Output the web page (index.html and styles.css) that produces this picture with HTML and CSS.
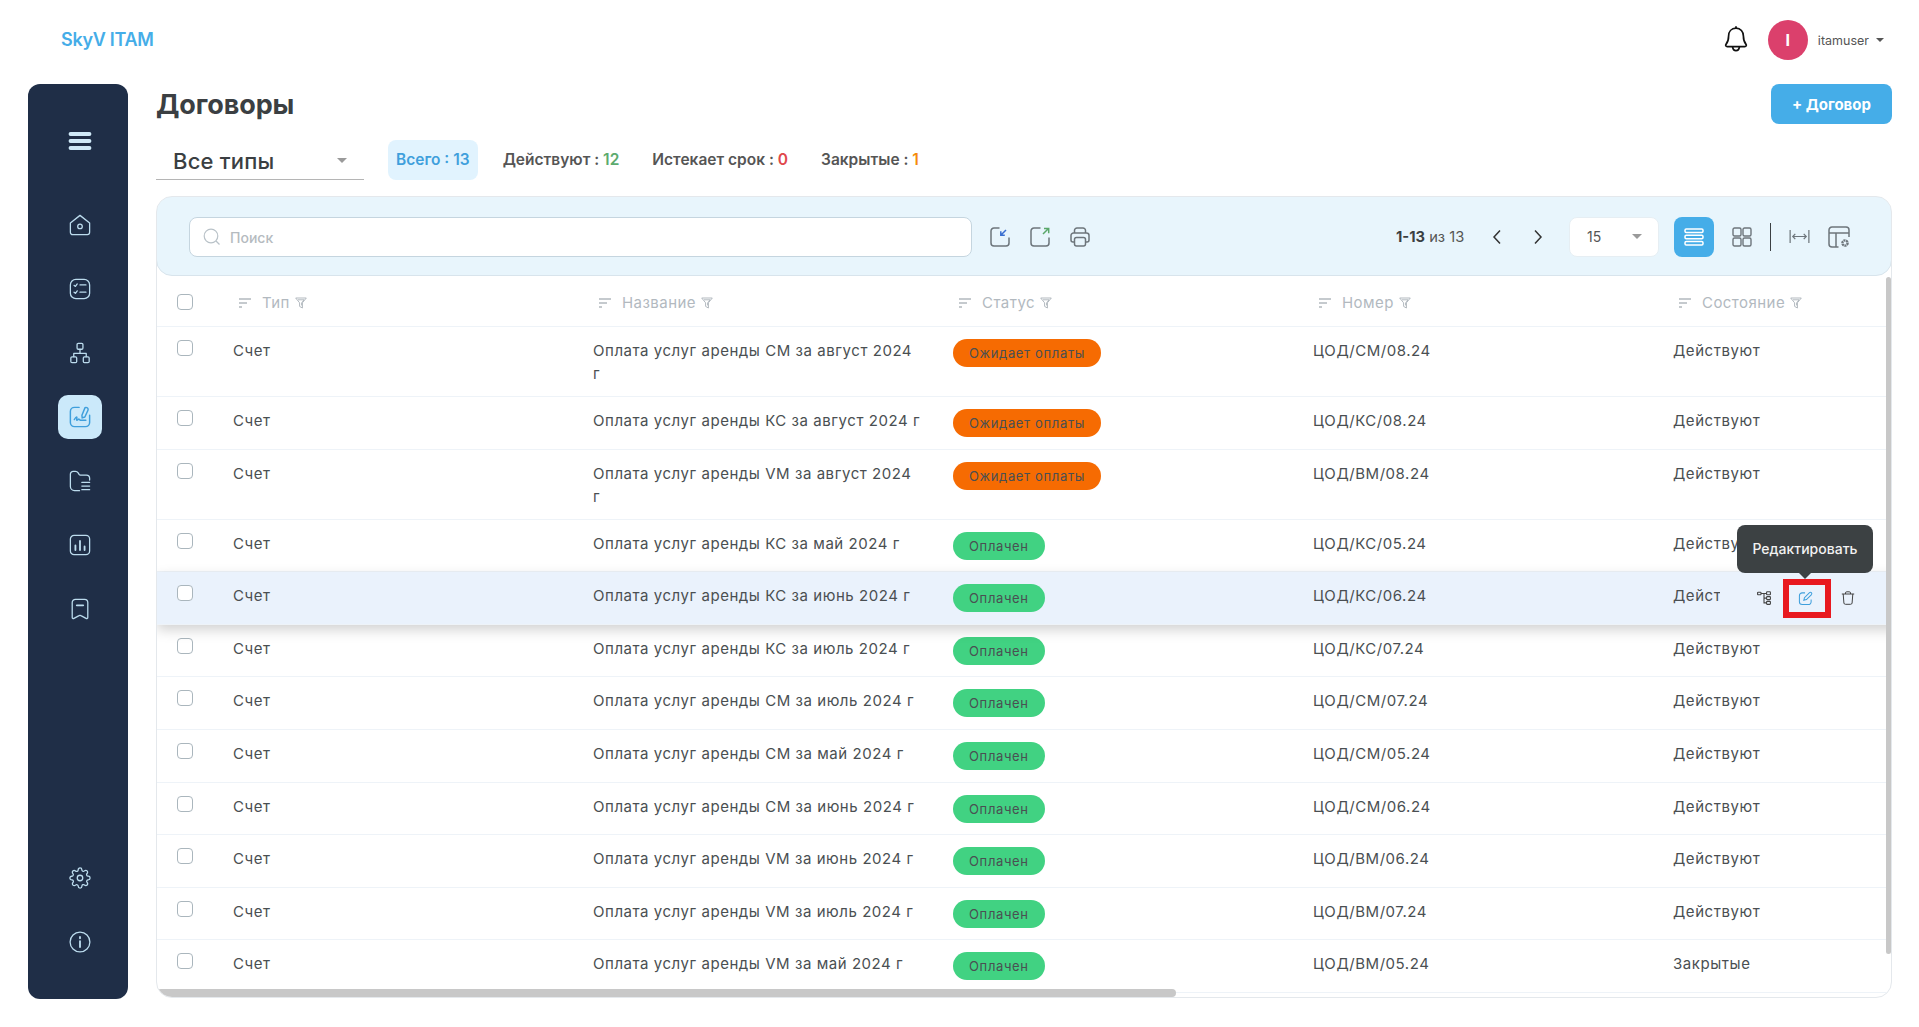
FILE: index.html
```html
<!DOCTYPE html>
<html lang="ru">
<head>
    <meta charset="utf-8">
    <title>Договоры</title>
    <link rel="stylesheet" href="styles.css">
</head>
<body>
    <svg class="sprite" xmlns="http://www.w3.org/2000/svg">
        <symbol id="i-sort" viewBox="0 0 12 10"><path d="M0 1h12M0 5h8M0 9h3" fill="none" stroke="currentColor" stroke-width="1.3"/></symbol>
        <symbol id="i-filter" viewBox="0 0 12 12"><path d="M.7 1h10.6L7.4 5.8V11L4.6 9.4V5.8zM3 2.8h6L6.6 6v2.4" fill="none" stroke="currentColor" stroke-width="1"/></symbol>
        <symbol id="i-tree" viewBox="0 0 14 14"><g fill="none" stroke="currentColor" stroke-width="1.1"><rect x=".6" y="1.2" width="3.4" height="2.6" rx=".6"/><rect x="9.6" y=".8" width="3.8" height="3" rx=".6"/><rect x="9.6" y="5.6" width="3.8" height="3" rx=".6"/><rect x="9.6" y="10.4" width="3.8" height="3" rx=".6"/><path d="M4 2.5h5.6M7 2.5v9.4h2.6M7 7.1h2.6"/></g></symbol>
    </svg>

    <header class="topbar">
        <div class="logo">SkyV ITAM</div>
        <div class="user">
            <svg class="bell" viewBox="0 0 24 28" fill="none" stroke="#111" stroke-width="1.7" stroke-linejoin="round"><path d="M12 3.2c-4.6 0-7.4 3.4-7.4 7.8 0 3.6-.6 6-2.6 8.4-.8 1 0 2.2 1.2 2.2h17.6c1.2 0 2-1.2 1.2-2.2-2-2.4-2.6-4.8-2.6-8.4 0-4.4-2.8-7.8-7.4-7.8z"/><path d="M12 1.2v2M8.6 21.8c.3 2.4 1.700 3.800 3.400 3.800s3.100-1.400 3.400-3.800"/></svg>
            <div class="avatar">I</div>
            <div class="username">itamuser</div>
            <span class="caret caret-dark"></span>
        </div>
    </header>

    <div class="layout">
        <nav class="sidebar">
            <a class="nav-burger"><svg viewBox="0 0 24 24" fill="none" stroke="#cfe9f8" stroke-width="3.800" stroke-linecap="round"><path d="M2.500 5h19M2.500 12h19M2.500 19h19"/></svg></a>
            <div class="nav-group">
                <a class="nav-item"><svg viewBox="0 0 24 24"><path d="M1.500 9.800 12 1.500l10.500 8.300v10.200a2.500 2.500 0 0 1-2.500 2.500H4A2.500 2.500 0 0 1 1.500 20z"/><circle cx="12" cy="13.500" r="2.500"/></svg></a>
                <a class="nav-item"><svg viewBox="0 0 24 24"><rect x="1.500" y="1.500" width="21" height="21" rx="6"/><path d="M5.500 8l1.500 1.200L9 6.500M5.500 15.500 7 16.700l2-2.700M12 7.500h6.500M12 15.500h6.500"/></svg></a>
                <a class="nav-item"><svg viewBox="0 0 24 24"><rect x="8.800" y="1.500" width="6.400" height="6.400" rx="1.300"/><rect x="2" y="16.200" width="6.400" height="6.400" rx="1.300"/><rect x="15.600" y="16.200" width="6.400" height="6.400" rx="1.300"/><path d="M12 8v4.500M5.200 16v-3.500h13.600V16"/></svg></a>
                <a class="nav-item active"><svg viewBox="0 0 24 24"><path d="M11 1.500H6A4.500 4.500 0 0 0 1.500 6v12A4.500 4.500 0 0 0 6 22.500h12a4.500 4.500 0 0 0 4.500-4.500v-8"/><path d="M17.500 1.800c1.300-.6 3 .2 3.300 1.500.2.800 0 1.300-.5 2.200l-3 6.500-2.900 1-.3-3zM5.800 14.800c1.200-2 2-3.200 2.700-2.800.8.500-.8 3.200 0 3.600.8.400 1.600-1.500 2.400-1.300.8.200.6 1.200 1.500 1.300h6"/></svg></a>
                <a class="nav-item"><svg viewBox="0 0 24 24"><path d="M11.500 22.500H6A4.500 4.500 0 0 1 1.500 18V4.500a3 3 0 0 1 3-3H7c1.500 0 2.300.6 3 1.700l1 1.600c.4.600.9.700 1.500.7h6.500a3.500 3.500 0 0 1 3.500 3.500V11"/><path d="M14 13.500h8.500M14 17.500h8.500M14 21.500h8.500"/></svg></a>
                <a class="nav-item"><svg viewBox="0 0 24 24"><rect x="1.500" y="1.500" width="21" height="21" rx="4"/><path d="M7 12.500v5M12 7.500v10M17 13.500v4" stroke-width="2"/></svg></a>
                <a class="nav-item"><svg viewBox="0 0 24 24"><path d="M3.500 5a3.500 3.500 0 0 1 3.500-3.500h10A3.500 3.500 0 0 1 20.500 5v16.200c0 1-1 1.500-1.900 1l-5.600-3a2 2 0 0 0-2 0l-5.600 3c-.9.500-1.900 0-1.900-1z"/><path d="M8.500 8h7" stroke-width="2"/></svg></a>
            </div>
            <div class="nav-group nav-bottom">
                <a class="nav-item"><svg viewBox="0 0 24 24"><circle cx="12" cy="12" r="3"/><path d="M19.400 15a1.650 1.650 0 0 0 .33 1.820l.06.06a2 2 0 0 1 0 2.830 2 2 0 0 1-2.830 0l-.06-.06a1.650 1.650 0 0 0-1.820-.33 1.650 1.650 0 0 0-1 1.510V21a2 2 0 0 1-2 2 2 2 0 0 1-2-2v-.09A1.650 1.650 0 0 0 9 19.400a1.650 1.650 0 0 0-1.820.33l-.06.06a2 2 0 0 1-2.830 0 2 2 0 0 1 0-2.830l.06-.06a1.650 1.650 0 0 0 .33-1.820 1.650 1.650 0 0 0-1.510-1H3a2 2 0 0 1-2-2 2 2 0 0 1 2-2h.09A1.650 1.650 0 0 0 4.600 9a1.650 1.650 0 0 0-.33-1.820l-.06-.06a2 2 0 0 1 0-2.830 2 2 0 0 1 2.830 0l.06.06a1.650 1.650 0 0 0 1.820.33H9a1.650 1.650 0 0 0 1-1.510V3a2 2 0 0 1 2-2 2 2 0 0 1 2 2v.09a1.650 1.650 0 0 0 1 1.510 1.650 1.650 0 0 0 1.820-.33l.06-.06a2 2 0 0 1 2.830 0 2 2 0 0 1 0 2.830l-.06.06a1.650 1.650 0 0 0-.33 1.820V9a1.650 1.650 0 0 0 1.510 1H21a2 2 0 0 1 2 2 2 2 0 0 1-2 2h-.09a1.650 1.650 0 0 0-1.510 1z"/></svg></a>
                <a class="nav-item"><svg viewBox="0 0 24 24"><circle cx="12" cy="12" r="10.800"/><path d="M12 11v6.500M12 6.500v1.500" stroke-width="2"/></svg></a>
            </div>
        </nav>

        <main class="content">
            <div class="title-row">
                <h1>Договоры</h1>
                <button class="btn-add">+ Договор</button>
            </div>

            <div class="filter-row">
                <div class="type-select">Все типы <span class="caret"></span></div>
                <div class="chip chip-active">Всего : 13</div>
                <div class="chip">Действуют : <b class="green">12</b></div>
                <div class="chip">Истекает срок : <b class="red">0</b></div>
                <div class="chip">Закрытые : <b class="orange">1</b></div>
            </div>

            <section class="card">
                <div class="toolbar">
                    <div class="search">
                        <svg class="search-icon" viewBox="0 0 18 18" fill="none" stroke="#b9c2c8" stroke-width="1.200"><circle cx="8" cy="8" r="6.800"/><path d="M13 13l3.500 3.500"/></svg>
                        <span class="search-text">Поиск</span>
                    </div>
                    <div class="tools">
                        <svg viewBox="0 0 20 20" fill="none" stroke="#6d757b" stroke-width="1.500"><path d="M9.500 1H4a3 3 0 0 0-3 3v12a3 3 0 0 0 3 3h12a3 3 0 0 0 3-3V10.500"/><path d="M16 3l-5 5M10.800 4.200v4h4" stroke="#3a6fd0"/></svg>
                        <svg viewBox="0 0 20 20" fill="none" stroke="#6d757b" stroke-width="1.500"><path d="M10.500 1H4a3 3 0 0 0-3 3v12a3 3 0 0 0 3 3h12a3 3 0 0 0 3-3V10.500"/><path d="M13 7l5.500-5.500M14 1.500h4.700v4.700" stroke="#5aa86a"/></svg>
                        <svg viewBox="0 0 20 20" fill="none" stroke="#6d757b" stroke-width="1.500"><path d="M4.500 6V3.500A2.500 2.500 0 0 1 7 1h6a2.500 2.500 0 0 1 2.500 2.500V6"/><path d="M4.500 15H3a2 2 0 0 1-2-2V8.500A2.500 2.500 0 0 1 3.500 6h13A2.500 2.500 0 0 1 19 8.500V13a2 2 0 0 1-2 2h-1.500"/><rect x="4.500" y="10.500" width="11" height="8.500" rx="2"/></svg>
                    </div>
                    <div class="pager">
                        <span class="pager-text"><b>1-13</b> из 13</span>
                        <svg class="chev" viewBox="0 0 10 16" fill="none" stroke="#333" stroke-width="1.500"><path d="M8 1.500 2 8l6 6.500"/></svg>
                        <svg class="chev" viewBox="0 0 10 16" fill="none" stroke="#333" stroke-width="1.500"><path d="M2 1.500 8 8l-6 6.500"/></svg>
                        <div class="per-page">15 <span class="caret"></span></div>
                    </div>
                    <div class="views">
                        <div class="view-btn"><svg viewBox="0 0 20 20" fill="none" stroke="#fff" stroke-width="1.500"><rect x="1" y="2" width="18" height="3.400" rx="1.200"/><rect x="1" y="8.300" width="18" height="3.400" rx="1.200"/><rect x="1" y="14.600" width="18" height="3.400" rx="1.200"/></svg></div>
                        <svg class="view-icon" viewBox="0 0 20 20" fill="none" stroke="#6d757b" stroke-width="1.400"><rect x="1" y="1" width="8" height="8" rx="1.500"/><rect x="11" y="1" width="8" height="8" rx="1.500"/><rect x="1" y="11" width="8" height="8" rx="1.500"/><rect x="11" y="11" width="8" height="8" rx="1.500"/></svg>
                        <span class="divider"></span>
                        <svg class="view-icon fit" viewBox="0 0 22 16" fill="none" stroke="#6d757b" stroke-width="1.300"><path d="M1 1v14M21 1v14M4 8h14M6.500 5.200 3.800 8l2.700 2.800M15.500 5.200 18.200 8l-2.700 2.800"/></svg>
                        <svg class="view-icon cols" viewBox="0 0 22 22" fill="none" stroke="#6d757b" stroke-width="1.500"><path d="M10.500 21H4a3 3 0 0 1-3-3V4a3 3 0 0 1 3-3h14a3 3 0 0 1 3 3v7M1 7h20M8 7v14"/><circle cx="17" cy="17" r="2.600" stroke-width="2.400" stroke-dasharray="2 .6"/></svg>
                    </div>
                </div>

                <div class="table-wrap">
                    <table>
                        <thead>
                            <tr>
                                <th class="col-check"><input type="checkbox"></th>
                                <th><svg class="sort"><use href="#i-sort"/></svg>Тип<svg class="filter"><use href="#i-filter"/></svg></th>
                                <th><svg class="sort"><use href="#i-sort"/></svg>Название<svg class="filter"><use href="#i-filter"/></svg></th>
                                <th><svg class="sort"><use href="#i-sort"/></svg>Статус<svg class="filter"><use href="#i-filter"/></svg></th>
                                <th><svg class="sort"><use href="#i-sort"/></svg>Номер<svg class="filter"><use href="#i-filter"/></svg></th>
                                <th><svg class="sort"><use href="#i-sort"/></svg>Состояние<svg class="filter"><use href="#i-filter"/></svg></th>
                            </tr>
                        </thead>
                        <tbody>
                            <tr class="tall"><td class="col-check"><input type="checkbox"></td><td>Счет</td><td>Оплата услуг аренды СМ за август 2024 г</td><td><span class="badge wait">Ожидает оплаты</span></td><td>ЦОД/СМ/08.24</td><td>Действуют</td></tr>
                            <tr><td class="col-check"><input type="checkbox"></td><td>Счет</td><td>Оплата услуг аренды КС за август 2024 г</td><td><span class="badge wait">Ожидает оплаты</span></td><td>ЦОД/КС/08.24</td><td>Действуют</td></tr>
                            <tr class="tall"><td class="col-check"><input type="checkbox"></td><td>Счет</td><td>Оплата услуг аренды VM за август 2024 г</td><td><span class="badge wait">Ожидает оплаты</span></td><td>ЦОД/ВМ/08.24</td><td>Действуют</td></tr>
                            <tr><td class="col-check"><input type="checkbox"></td><td>Счет</td><td>Оплата услуг аренды КС за май 2024 г</td><td><span class="badge paid">Оплачен</span></td><td>ЦОД/КС/05.24</td><td>Действуют</td></tr>
                            <tr class="hovered">
                                <td class="col-check"><input type="checkbox"></td><td>Счет</td><td>Оплата услуг аренды КС за июнь 2024 г</td><td><span class="badge paid">Оплачен</span></td><td>ЦОД/КС/06.24</td>
                                <td class="has-actions">Действуют
                                    <div class="row-actions">
                                        <svg class="act"><use href="#i-tree"/></svg>
                                        <div class="act-edit">
                                            <svg viewBox="0 0 16 16" fill="none" stroke="#3f9fdc" stroke-width="1.100"><path d="M7.500 2H4.500A3 3 0 0 0 1.500 5v6.500a3 3 0 0 0 3 3H11a3 3 0 0 0 3-3V9"/><path d="M12.300 1.700a1.500 1.500 0 0 1 2.100 2.100L9 9.200l-2.800.7.700-2.800z"/></svg>
                                            <div class="tooltip">Редактировать</div>
                                        </div>
                                        <svg class="act" viewBox="0 0 14 14" fill="none" stroke="#444" stroke-width="1"><path d="M.8 3h12.400M4.500 3V2a1.200 1.200 0 0 1 1.200-1.200h2.600A1.200 1.200 0 0 1 9.500 2v1M2.200 3l.7 9a1.500 1.500 0 0 0 1.500 1.300h5.200a1.500 1.500 0 0 0 1.500-1.300l.7-9"/></svg>
                                    </div>
                                </td>
                            </tr>
                            <tr><td class="col-check"><input type="checkbox"></td><td>Счет</td><td>Оплата услуг аренды КС за июль 2024 г</td><td><span class="badge paid">Оплачен</span></td><td>ЦОД/КС/07.24</td><td>Действуют</td></tr>
                            <tr><td class="col-check"><input type="checkbox"></td><td>Счет</td><td>Оплата услуг аренды СМ за июль 2024 г</td><td><span class="badge paid">Оплачен</span></td><td>ЦОД/СМ/07.24</td><td>Действуют</td></tr>
                            <tr><td class="col-check"><input type="checkbox"></td><td>Счет</td><td>Оплата услуг аренды СМ за май 2024 г</td><td><span class="badge paid">Оплачен</span></td><td>ЦОД/СМ/05.24</td><td>Действуют</td></tr>
                            <tr><td class="col-check"><input type="checkbox"></td><td>Счет</td><td>Оплата услуг аренды СМ за июнь 2024 г</td><td><span class="badge paid">Оплачен</span></td><td>ЦОД/СМ/06.24</td><td>Действуют</td></tr>
                            <tr><td class="col-check"><input type="checkbox"></td><td>Счет</td><td>Оплата услуг аренды VM за июнь 2024 г</td><td><span class="badge paid">Оплачен</span></td><td>ЦОД/ВМ/06.24</td><td>Действуют</td></tr>
                            <tr><td class="col-check"><input type="checkbox"></td><td>Счет</td><td>Оплата услуг аренды VM за июль 2024 г</td><td><span class="badge paid">Оплачен</span></td><td>ЦОД/ВМ/07.24</td><td>Действуют</td></tr>
                            <tr><td class="col-check"><input type="checkbox"></td><td>Счет</td><td>Оплата услуг аренды VM за май 2024 г</td><td><span class="badge paid">Оплачен</span></td><td>ЦОД/ВМ/05.24</td><td>Закрытые</td></tr>
                        </tbody>
                    </table>
                </div>
                <div class="scroll-v"></div>
                <div class="scroll-h"></div>
            </section>
        </main>
    </div>
</body>
</html>
```

FILE: styles.css
```css
* {
    box-sizing: border-box;
}

html,
body {
    margin: 0;
    height: 100%;
    overflow: hidden;
}

body {
    background: #fff;
    color: #4a4f52;
    font-family: Inter, "Noto Sans", sans-serif;
    font-size: 15px;
}

.sprite {
    display: none;
}

/* Top bar */

.topbar {
    height: 84px;
    display: flex;
    align-items: center;
    justify-content: space-between;
    padding: 0 35px 4px 61px;
}

.logo {
    color: #45ade8;
    font-size: 18px;
    font-weight: 600;
    letter-spacing: -0.3px;
    margin-bottom: 2px;
}

.user {
    display: flex;
    align-items: center;
}

.bell {
    width: 24px;
    height: 28px;
    margin-right: 20px;
    margin-bottom: 2px;
}

.avatar {
    width: 40px;
    height: 40px;
    border-radius: 50%;
    background: #db406c;
    color: #fff;
    font-weight: 700;
    font-size: 16px;
    display: flex;
    align-items: center;
    justify-content: center;
    margin-right: 10px;
}

.username {
    font-size: 12.5px;
    color: #555;
    margin-right: 7px;
}

.caret {
    display: inline-block;
    width: 0;
    height: 0;
    border-left: 5px solid transparent;
    border-right: 5px solid transparent;
    border-top: 5px solid #9a9a9a;
}

.caret-dark {
    border-left-width: 4px;
    border-right-width: 4px;
    border-top: 4px solid #555;
}

/* Layout */

.layout {
    display: flex;
    padding-left: 28px;
    gap: 28px;
}

.sidebar {
    width: 100px;
    height: 915px;
    flex: none;
    background: #1f2e47;
    border-radius: 12px;
    display: flex;
    flex-direction: column;
    align-items: center;
    padding: 35px 0 35px 4px;
}

.nav-burger {
    width: 44px;
    height: 44px;
    display: flex;
    align-items: center;
    justify-content: center;
    margin-bottom: 40px;
}

.nav-burger svg {
    width: 24px;
    height: 24px;
}

.nav-group {
    display: flex;
    flex-direction: column;
    gap: 20px;
}

.nav-bottom {
    margin-top: auto;
}

.nav-item {
    width: 44px;
    height: 44px;
    border-radius: 10px;
    display: flex;
    align-items: center;
    justify-content: center;
}

.nav-item svg {
    width: 22px;
    height: 22px;
    fill: none;
    stroke: #bcdcee;
    stroke-width: 1.4;
    stroke-linecap: round;
    stroke-linejoin: round;
}

.nav-item.active {
    background: #cbe9fa;
}

.nav-item.active svg {
    stroke: #3f9fdc;
    stroke-width: 1.6;
}

/* Content */

.content {
    width: 1736px;
    flex: none;
}

.title-row {
    height: 40px;
    display: flex;
    align-items: center;
    justify-content: space-between;
}

h1 {
    margin: 0;
    font-size: 27px;
    font-weight: 700;
    letter-spacing: -0.1px;
    color: #3b3f42;
}

.btn-add {
    width: 121px;
    height: 40px;
    border: 0;
    border-radius: 8px;
    background: #45ade8;
    color: #fff;
    font-family: Inter, sans-serif;
    font-size: 15px;
    font-weight: 700;
}

.filter-row {
    margin-top: 16px;
    height: 40px;
    display: flex;
    align-items: center;
    font-size: 15.5px;
    font-weight: 600;
    color: #555;
}

.type-select {
    width: 208px;
    height: 40px;
    border-bottom: 1px solid #b5b5b5;
    padding: 2px 17px 0 17px;
    display: flex;
    align-items: center;
    justify-content: space-between;
    font-size: 22px;
    font-weight: 500;
    letter-spacing: 0.2px;
    color: #3b3f42;
    margin-right: 24px;
}

.chip {
    height: 40px;
    padding: 0 8px 2px;
    margin-right: 17px;
    border-radius: 8px;
    display: flex;
    align-items: center;
    white-space: pre;
}

.chip b {
    font-weight: 600;
}

.chip-active {
    background: #e1f3fe;
    color: #3f9fdc;
}

.green {
    color: #5cab6e;
}

.red {
    color: #e0474c;
}

.orange {
    color: #f58a0b;
}

/* Card with toolbar and table */

.card {
    margin-top: 16px;
    height: 802px;
    position: relative;
    overflow: hidden;
    border: 1px solid #e4e8ec;
    border-radius: 16px;
}

.toolbar {
    height: 80px;
    margin: -1px -1px 0;
    padding: 1px 0 0 32px;
    display: flex;
    align-items: center;
    background: #e8f5fc;
    border: 1px solid #d8e4ec;
    border-radius: 16px;
}

.search {
    width: 783px;
    height: 40px;
    display: flex;
    align-items: center;
    padding-left: 13px;
    gap: 9px;
    background: #fff;
    border: 1px solid #c5d5df;
    border-radius: 8px;
    color: #b5bbc0;
    font-size: 14px;
    font-weight: 500;
}

.search-icon {
    width: 18px;
    height: 18px;
}

.search-text {
    padding-top: 2px;
}

.tools {
    display: flex;
    gap: 20px;
    margin-left: 18px;
}

.tools svg {
    width: 20px;
    height: 20px;
}

.pager {
    display: flex;
    align-items: center;
    margin-left: 306px;
    font-size: 14.7px;
}

.pager-text {
    width: 72px;
    color: #555;
    white-space: nowrap;
}

.pager-text b {
    font-weight: 700;
    color: #3b3f42;
}

.chev {
    width: 10px;
    height: 16px;
    margin-left: 31px;
}

.pager-text + .chev {
    margin-left: 24px;
}

.chev + .per-page {
    margin-left: 26px;
}

.per-page {
    width: 90px;
    height: 40px;
    background: #fff;
    border: 1px solid #e6eef3;
    border-radius: 8px;
    display: flex;
    align-items: center;
    justify-content: space-between;
    padding: 0 16px 0 17px;
    color: #555;
    font-size: 14px;
}

.views {
    display: flex;
    align-items: center;
    margin-left: 15px;
}

.view-btn {
    width: 40px;
    height: 40px;
    border-radius: 8px;
    background: #45ade8;
    display: flex;
    align-items: center;
    justify-content: center;
}

.view-btn svg {
    width: 20px;
    height: 20px;
}

.view-icon {
    width: 20px;
    height: 20px;
    margin-left: 18px;
}

.divider {
    width: 1px;
    height: 28px;
    background: #3b3f42;
    margin-left: 18px;
}

.view-icon.fit {
    width: 21px;
    height: 15px;
}

.view-icon.cols {
    width: 22px;
    height: 22px;
}

/* Table */

.table-wrap {
    overflow: hidden;
}

table {
    width: 1867px;
    table-layout: fixed;
    border-collapse: separate;
    border-spacing: 0;
}

th,
td {
    width: 360px;
    padding: 12px 21px 0 9px;
    text-align: left;
    vertical-align: top;
    font-weight: 400;
    line-height: 23px;
    letter-spacing: 0.55px;
    border-bottom: 1px solid #eef3f8;
}

th {
    height: 51px;
    padding-top: 16px;
    padding-left: 15px;
    color: #b2b9bf;
    line-height: 22px;
    letter-spacing: 0.45px;
}

td {
    height: 52.6px;
}

tr.tall td {
    height: 70px;
}

th.col-check,
td.col-check {
    width: 67px;
    padding: 13px 0 0 20px;
}

th.col-check {
    padding-top: 18px;
}

input[type="checkbox"] {
    appearance: none;
    display: block;
    width: 16px;
    height: 16px;
    margin: 0;
    background: #fff;
    border: 1.5px solid #aab6bd;
    border-radius: 4px;
}

.sort {
    width: 12px;
    height: 10px;
    margin-right: 11px;
}

.filter {
    width: 12px;
    height: 12px;
    margin-left: 5px;
    vertical-align: -1px;
}

.badge {
    display: inline-block;
    vertical-align: top;
    height: 28px;
    line-height: 28px;
    padding: 0 16px;
    border-radius: 14px;
    font-size: 13px;
    letter-spacing: 0.65px;
    color: #4a4f52;
    white-space: nowrap;
}

.wait {
    background: #f66b02;
}

.paid {
    background: #41d282;
}

tr.hovered {
    position: relative;
    box-shadow: 0 5px 12px rgba(0, 0, 0, 0.18);
}

tr.hovered td {
    background: #eaf2fc;
}

.has-actions {
    position: relative;
}

.row-actions {
    position: absolute;
    top: 0;
    bottom: 0;
    left: 56px;
    width: 172px;
    display: flex;
    align-items: center;
    background: #eaf2fc;
    padding-left: 37px;
}

.act {
    width: 14px;
    height: 14px;
    color: #444;
    flex: none;
}

.act-edit {
    position: relative;
    width: 48px;
    height: 39px;
    margin: 1px 10px 0 12px;
    border: 6px solid #e8191f;
    display: flex;
    align-items: center;
    justify-content: center;
    flex: none;
}

.act-edit svg {
    width: 15px;
    height: 15px;
    margin-right: 3px;
}

/* Tooltip over the neighbouring row */

.tooltip {
    position: absolute;
    left: -52px;
    bottom: 39px;
    width: 136px;
    height: 48px;
    border-radius: 8px;
    background: #3c4143;
    color: #f2f2f2;
    font-size: 14px;
    font-weight: 500;
    line-height: 48px;
    text-align: center;
    letter-spacing: 0;
}

.tooltip::after {
    content: "";
    position: absolute;
    left: 62px;
    top: 48px;
    border-left: 6px solid transparent;
    border-right: 6px solid transparent;
    border-top: 6px solid #3c4143;
}

/* Scrollbar thumbs */

.scroll-v {
    position: absolute;
    right: 0;
    top: 80px;
    width: 5px;
    height: 677px;
    background: #c8c8c8;
    border-radius: 3px;
}

.scroll-h {
    position: absolute;
    left: 0;
    bottom: 0;
    width: 1019px;
    height: 8px;
    background: #c8c8c8;
    border-radius: 4px;
}
```
